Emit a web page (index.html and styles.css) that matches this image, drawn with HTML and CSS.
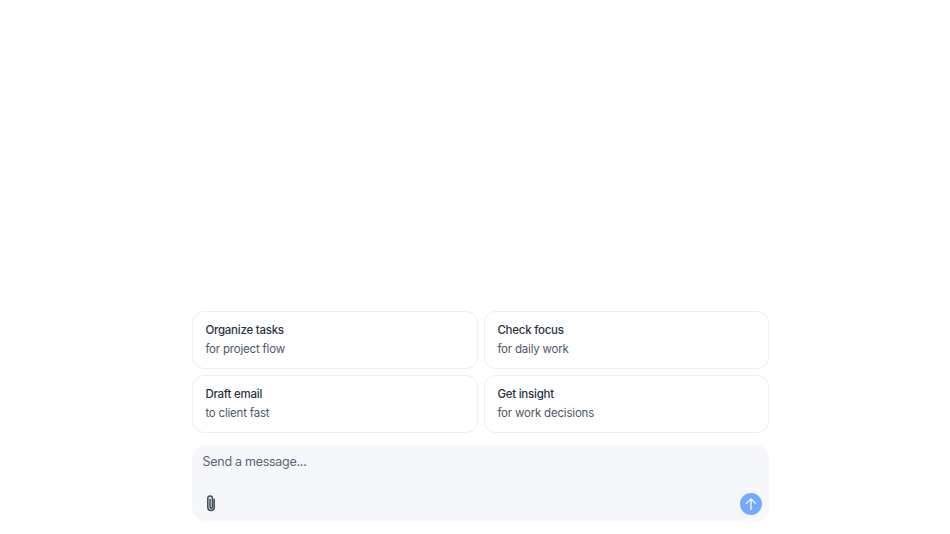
FILE: index.html
```html
<!DOCTYPE html>
<html lang="en">
<head>
<meta charset="utf-8">
<title>Chat</title>
<link rel="stylesheet" href="styles.css">
</head>
<body>
<main class="chat">
  <div class="suggestions">
    <button class="card"><span class="card-title">Organize tasks</span><span class="card-sub">for project flow</span></button>
    <button class="card"><span class="card-title">Check focus</span><span class="card-sub">for daily work</span></button>
    <button class="card"><span class="card-title">Draft email</span><span class="card-sub">to client fast</span></button>
    <button class="card"><span class="card-title">Get insight</span><span class="card-sub">for work decisions</span></button>
  </div>
  <form class="composer">
    <div class="placeholder">Send a message...</div>
    <div class="tools">
      <svg class="clip" width="18" height="18" viewBox="0 0 18 18" fill="none" stroke="#3f4856" stroke-width="1.5" stroke-linecap="round"><path d="M12.2 5.2v8a3.2 3.2 0 0 1-6.4 0V4.2a2.3 2.3 0 0 1 4.6 0v8.8a1.2 1.2 0 0 1-2.4 0V5.2"/></svg>
      <span class="send"><svg width="14" height="14" viewBox="0 0 14 14" fill="none" stroke="#fff" stroke-width="1.2" stroke-linecap="round" stroke-linejoin="round"><path d="M7 12.5V1.8M2.4 6.4 7 1.8l4.6 4.6"/></svg></span>
    </div>
  </form>
</main>
</body>
</html>
```
FILE: styles.css
```css
* { box-sizing: border-box; }
html, body { margin: 0; height: 100%; background: #fff; }
body { font-family: Inter, sans-serif; overflow: hidden; }
.chat {
  width: 577px;
  height: 534px;
  margin-left: 192px;
  padding-bottom: 13px;
  display: flex;
  flex-direction: column;
  justify-content: flex-end;
  gap: 12px;
}
.suggestions {
  display: grid;
  grid-template-columns: 286px 285px;
  gap: 6px;
}
.card {
  height: 58px;
  padding: 10px 12.4px 9px;
  border: 1px solid #eceef5;
  border-radius: 12px;
  background: #fff;
  display: flex;
  flex-direction: column;
  align-items: flex-start;
  gap: 3px;
  font-family: inherit;
  text-align: left;
}
.card-title { font-size: 11.5px; line-height: 16px; font-weight: 500; letter-spacing: -0.25px; color: #2a3342; }
.card-sub { font-size: 11.5px; line-height: 16px; letter-spacing: -0.2px; color: #4f5866; }
.composer {
  height: 76px;
  padding: 8px 7px 6px 10.5px;
  border-radius: 14px;
  background: #f5f7fb;
  display: flex;
  flex-direction: column;
  justify-content: space-between;
}
.placeholder { font-size: 12.5px; line-height: 17px; letter-spacing: -0.27px; color: #5b6472; }
.tools { display: flex; align-items: center; justify-content: space-between; }
.clip { display: block; margin: 0 0 3px -1px; }
.send {
  width: 22px;
  height: 22px;
  border-radius: 50%;
  background: #76a9fa;
  display: flex;
  align-items: center;
  justify-content: center;
}
```
